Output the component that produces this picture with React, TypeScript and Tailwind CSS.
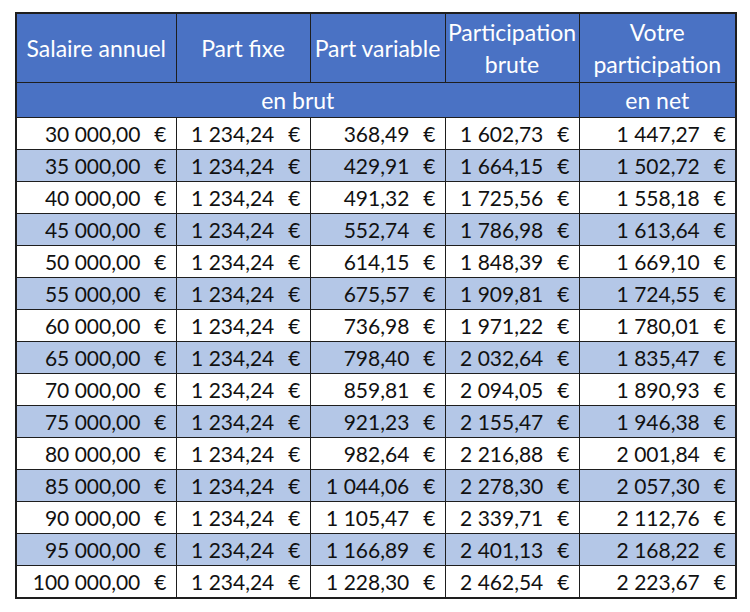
const ROWS: string[][] = [
  ["30 000,00", "1 234,24", "368,49", "1 602,73", "1 447,27"],
  ["35 000,00", "1 234,24", "429,91", "1 664,15", "1 502,72"],
  ["40 000,00", "1 234,24", "491,32", "1 725,56", "1 558,18"],
  ["45 000,00", "1 234,24", "552,74", "1 786,98", "1 613,64"],
  ["50 000,00", "1 234,24", "614,15", "1 848,39", "1 669,10"],
  ["55 000,00", "1 234,24", "675,57", "1 909,81", "1 724,55"],
  ["60 000,00", "1 234,24", "736,98", "1 971,22", "1 780,01"],
  ["65 000,00", "1 234,24", "798,40", "2 032,64", "1 835,47"],
  ["70 000,00", "1 234,24", "859,81", "2 094,05", "1 890,93"],
  ["75 000,00", "1 234,24", "921,23", "2 155,47", "1 946,38"],
  ["80 000,00", "1 234,24", "982,64", "2 216,88", "2 001,84"],
  ["85 000,00", "1 234,24", "1 044,06", "2 278,30", "2 057,30"],
  ["90 000,00", "1 234,24", "1 105,47", "2 339,71", "2 112,76"],
  ["95 000,00", "1 234,24", "1 166,89", "2 401,13", "2 168,22"],
  ["100 000,00", "1 234,24", "1 228,30", "2 462,54", "2 223,67"],
];

const HEAD = [
  ["Salaire annuel"],
  ["Part fixe"],
  ["Part variable"],
  ["Participation", "brute"],
  ["Votre", "participation"],
];

const WIDTHS = ["w-[160px]", "w-[134px]", "w-[135px]", "w-[134px]", "w-[157px]"];

export default function App() {
  return (
    <div className="h-[612px] w-[750px] bg-white pl-[15px] pt-[12px] font-['Lato','Liberation_Sans',sans-serif] text-[#111]">
      <table className="border-collapse border-2 border-[#1e1e1e]">
        <colgroup>
          {WIDTHS.map((w, i) => (
            <col key={i} className={w} />
          ))}
        </colgroup>
        <thead className="text-[23px]">
          <tr className="h-[69px] bg-[#4a72c4] text-white">
            {HEAD.map((lines, i) => (
              <th key={i} className="whitespace-nowrap border border-[#1e1e1e] p-0 text-center font-normal leading-[32px]">
                {lines.map((l) => (
                  <div key={l}>{l}</div>
                ))}
              </th>
            ))}
          </tr>
          <tr className="h-[34px] bg-[#4a72c4] text-white">
            <th colSpan={4} className="border border-[#1e1e1e] text-center font-normal">
              en brut
            </th>
            <th className="border border-[#1e1e1e] text-center font-normal">en net</th>
          </tr>
        </thead>
        <tbody className="text-[21px]">
          {ROWS.map((r, i) => (
            <tr key={i} className={i % 2 ? "h-[32px] bg-[#b4c7e7]" : "h-[32px] bg-white"}>
              {r.map((v, j) => (
                <td key={j} className="border border-[#1e1e1e] p-0 leading-none">
                  <div className="flex justify-end pr-[9px]">
                    <span>{v}</span>
                    <span className="ml-[14px]">€</span>
                  </div>
                </td>
              ))}
            </tr>
          ))}
        </tbody>
      </table>
    </div>
  );
}
